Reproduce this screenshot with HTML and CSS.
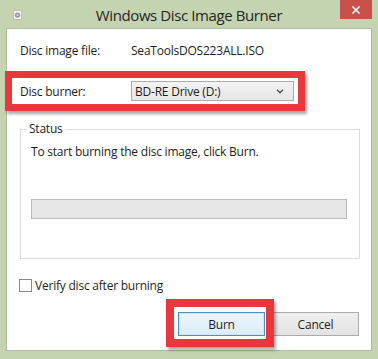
FILE: index.html
```html
<!DOCTYPE html>
<html>
<head>
<meta charset="utf-8">
<link rel="stylesheet" href="styles.css">
</head>
<body>
<div class="window">
  <div class="titlebar">
    <div class="tb-left">
      <svg class="app-icon" width="9" height="10" viewBox="0 0 9 10">
        <rect x="0.5" y="0.5" width="8" height="9" fill="#f4f4f4" stroke="#b9c0b0"/>
        <circle cx="4.5" cy="5" r="2.6" fill="#8d96a4"/>
        <circle cx="4.5" cy="5" r="0.9" fill="#e8ecf0"/>
      </svg>
    </div>
    <div class="title">Windows Disc Image Burner</div>
    <div class="tb-right">
      <div class="close">
        <svg width="10" height="10" viewBox="0 0 10 10"><path d="M1.5 1.5 L8.5 8.5 M8.5 1.5 L1.5 8.5" stroke="#fff" stroke-width="1.6"/></svg>
      </div>
    </div>
  </div>
  <div class="panel">
    <div class="row row-file">
      <span class="label">Disc image file:</span>
      <span class="value">SeaToolsDOS223ALL.ISO</span>
    </div>
    <div class="row row-burner">
      <span class="label">Disc burner:</span>
      <div class="select">
        <span>BD-RE Drive (D:)</span>
        <svg class="chev" width="8" height="5" viewBox="0 0 8 5"><path d="M1 0.8 L4 3.8 L7 0.8" fill="none" stroke="#555" stroke-width="1.5"/></svg>
      </div>
    </div>
    <div class="group">
      <div class="legend">Status</div>
      <div class="status-text">To start burning the disc image, click Burn.</div>
      <div class="progress"></div>
    </div>
    <label class="check-row">
      <span class="checkbox"></span>
      <span>Verify disc after burning</span>
    </label>
    <div class="buttons">
      <div class="btn btn-default">Burn</div>
      <div class="btn">Cancel</div>
    </div>
  </div>
  <div class="highlight hl-burner"></div>
  <div class="highlight hl-burn"></div>
</div>
</body>
</html>
```
FILE: styles.css
```css
* { box-sizing: border-box; }
html, body { margin: 0; padding: 0; background: #c4d3b0; }
body { font-family: "Open Sans", "Noto Sans", sans-serif; font-size: 12px; letter-spacing: -0.22px; color: #1e1e1e; }

.window {
  position: relative;
  width: 378px;
  height: 359px;
  background: #c4d3b0;
  padding: 0 6px 8px 6px;
}

.titlebar {
  height: 28px;
  display: grid;
  grid-template-columns: 1fr auto 1fr;
}
.tb-left { padding: 10px 0 0 7px; }
.app-icon { display: block; }
.title {
  margin-top: 5px;
  line-height: 20px;
  font-size: 15px;
  color: #262626;
  letter-spacing: -0.4px;
}
.tb-right { display: flex; justify-content: flex-end; }
.close {
  width: 32px;
  height: 19px;
  background: #c7504a;
  display: flex;
  align-items: center;
  justify-content: center;
}

.panel {
  width: 366px;
  height: 323px;
  background: #fff;
  border: 1px solid #aebb9c;
}

.row {
  display: flex;
  align-items: center;
  height: 20px;
  padding-left: 13px;
}
.row-file { margin-top: 11px; }
.row-burner { margin-top: 21px; }
.label { width: 111px; flex: none; }

.select {
  width: 163px;
  height: 20px;
  border: 1px solid #acacac;
  background: linear-gradient(#f3f3f3, #e6e6e6);
  display: flex;
  align-items: center;
  justify-content: space-between;
  padding: 0 9px 0 3px;
}
.chev { display: block; }

.group {
  margin: 28px 0 0 13px;
  width: 340px;
  height: 130px;
  border: 1px solid #dcdcdc;
  padding: 0 0 0 10px;
}
.legend {
  width: fit-content;
  margin: -9px 0 0 -4px;
  padding: 0 2px;
  background: #fff;
  line-height: 16px;
}
.status-text { margin-top: 7px; line-height: 16px; }
.progress {
  margin-top: 39px;
  width: 316px;
  height: 20px;
  background: #e6e6e6;
  border: 1px solid #bcbcbc;
}

.check-row {
  display: flex;
  align-items: center;
  gap: 3px;
  margin: 18px 0 0 12px;
  height: 16px;
}
.checkbox {
  width: 13px;
  height: 13px;
  border: 1px solid #888;
  background: #fff;
}

.buttons {
  display: flex;
  justify-content: flex-end;
  gap: 7px;
  margin-top: 19px;
  padding-right: 12px;
}
.btn {
  width: 87px;
  height: 24px;
  border: 1px solid #acacac;
  background: linear-gradient(#efefef, #e3e3e3);
  display: flex;
  align-items: center;
  justify-content: center;
}
.btn-default {
  border-color: #4f8fc6;
  background: linear-gradient(#edf5fc, #dcecfa);
  box-shadow: inset 0 0 0 1px #cfe4f7;
}

.highlight {
  position: absolute;
  border: 7px solid #e8373d;
  box-shadow: 2px 3px 3px rgba(0,0,0,0.35);
}
.hl-burner { left: 5px; top: 71px; width: 300px; height: 40px; }
.hl-burn { left: 166px; top: 299px; width: 108px; height: 48px; border-width: 8px; }
```
